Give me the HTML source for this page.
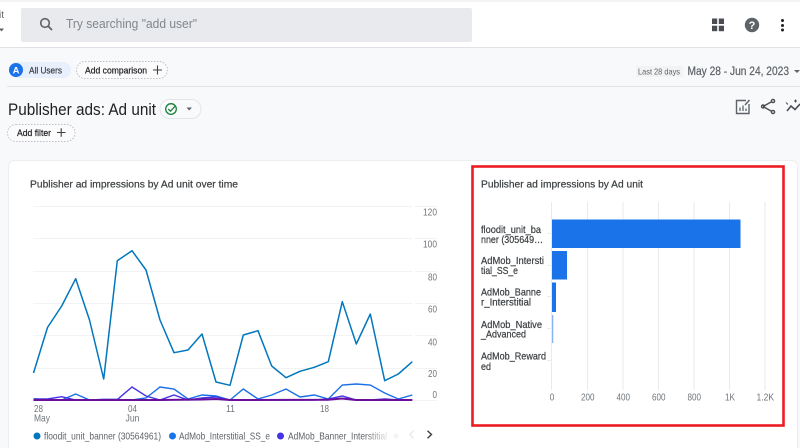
<!DOCTYPE html>
<html><head><meta charset="utf-8"><style>
html,body{margin:0;padding:0;width:800px;height:448px;overflow:hidden;background:#f8f9fa}
svg{display:block;font-family:"Liberation Sans",sans-serif;filter:blur(.3px)}
.m{stroke:currentColor;stroke-width:.22px}
</style></head><body>
<svg width="800" height="448" viewBox="0 0 800 448" xmlns="http://www.w3.org/2000/svg">
<defs><linearGradient id="fade" x1="0" x2="1" y1="0" y2="0"><stop offset="0" stop-color="#fff" stop-opacity="0"/><stop offset="1" stop-color="#fff" stop-opacity=".9"/></linearGradient></defs>
<rect width="800" height="448" fill="#f8f9fa"/>
<!-- header -->
<rect x="0" y="0" width="800" height="47" fill="#fff"/>
<rect x="0" y="0" width="800" height="2" fill="#f3f4f5"/>
<rect x="0" y="47" width="800" height="1" fill="#e0e2e5"/>
<text x="-1" y="18" font-size="10" fill="#5f6368">it</text>
<path d="M-1 28.500H4L1.500 31.500Z" fill="#5f6368"/>
<rect x="21" y="8" width="451" height="34" rx="2" fill="#e8eaed"/>
<circle cx="45" cy="23" r="4.300" fill="none" stroke="#5f6368" stroke-width="1.600"/>
<path d="M48 26L52 30" stroke="#5f6368" stroke-width="1.800"/>
<text x="66" y="28" font-size="13" fill="#80868b" textLength="131" lengthAdjust="spacingAndGlyphs">Try searching "add user"</text>
<!-- header right icons -->
<g fill="#4a4d52"><rect x="712" y="18.500" width="5.200" height="5.500"/><rect x="718.800" y="18.500" width="5.200" height="5.500"/><rect x="712" y="25.700" width="5.200" height="5.500"/><rect x="718.800" y="25.700" width="5.200" height="5.500"/></g>
<circle cx="752" cy="25" r="7.200" fill="#5f6368"/>
<text x="752" y="29" font-size="11" font-weight="bold" fill="#fff" text-anchor="middle">?</text>
<g fill="#202124"><circle cx="782.500" cy="20.500" r="1.500"/><circle cx="782.500" cy="25.500" r="1.500"/><circle cx="782.500" cy="30" r="1.500"/></g>
<!-- chips -->
<rect x="9" y="62" width="62" height="16" rx="8" fill="#e8f0fe"/>
<circle cx="16" cy="70" r="7" fill="#1a73e8"/>
<text x="16" y="73.500" font-size="9.500" font-weight="bold" fill="#fff" text-anchor="middle">A</text>
<text x="29" y="73.500" font-size="9.500" fill="#3c4043" color="#3c4043" class="m" textLength="33" lengthAdjust="spacingAndGlyphs">All Users</text>
<rect x="76.500" y="61.500" width="91" height="17" rx="8.500" fill="#fbfbfc" stroke="#bdc1c6" stroke-width="1" stroke-dasharray="1.500 1.500"/>
<text x="85" y="73.500" font-size="9.500" fill="#202124" color="#202124" class="m" textLength="62" lengthAdjust="spacingAndGlyphs">Add comparison</text>
<path d="M153 70H162M157.500 65.500V74.500" stroke="#3c4043" stroke-width="1.100"/>
<rect x="636" y="66" width="47" height="11" fill="#f1f3f4"/>
<text x="638" y="74.500" font-size="8.500" fill="#5f6368" textLength="42" lengthAdjust="spacingAndGlyphs">Last 28 days</text>
<text x="687.500" y="75" font-size="11.500" fill="#5f6368" color="#5f6368" class="m" textLength="101.500" lengthAdjust="spacingAndGlyphs">May 28 - Jun 24, 2023</text>
<path d="M794 70H800L797 73Z" fill="#5f6368"/>
<rect x="7" y="86" width="793" height="1" fill="#e3e5e8"/>
<!-- title -->
<text x="8" y="115" font-size="17" fill="#202124" textLength="148" lengthAdjust="spacingAndGlyphs">Publisher ads: Ad unit</text>
<rect x="160" y="99.500" width="41" height="19" rx="9.500" fill="#f9fafb" stroke="#e3e5e8"/>
<circle cx="171" cy="109" r="5.300" fill="none" stroke="#188038" stroke-width="1.300"/>
<path d="M168.300 109L170.500 111.200L175 106.300" fill="none" stroke="#188038" stroke-width="1.300"/>
<path d="M186.500 107.500H192L189.200 110.500Z" fill="#5f6368"/>
<rect x="7.500" y="124.500" width="67.500" height="17" rx="8.500" fill="#fbfbfc" stroke="#bdc1c6" stroke-dasharray="1.500 1.500"/>
<text x="17" y="136" font-size="9.500" fill="#202124" color="#202124" class="m" textLength="34" lengthAdjust="spacingAndGlyphs">Add filter</text>
<path d="M57 132.500H65.500M61.200 128.200V136.800" stroke="#3c4043" stroke-width="1.100"/>
<!-- action icons -->
<path d="M746 100.500H736.500V113.500H749V104" fill="none" stroke="#5f6368" stroke-width="1.400"/>
<path d="M740 111V107.500M743 111V105.500M746 111V108.500" stroke="#5f6368" stroke-width="1.300"/>
<path d="M745 105L749.500 100" stroke="#5f6368" stroke-width="1.500"/>
<g fill="none" stroke="#4a4d52" stroke-width="1.400"><path d="M763 106.500L772 101.500M763 106.500L772 111.500"/><circle cx="763" cy="106.500" r="1.500"/><circle cx="773" cy="101" r="1.600"/><circle cx="773" cy="112" r="1.600"/></g>
<path d="M787 111L791 106L795 109.500L800 104" fill="none" stroke="#4a4d52" stroke-width="1.600"/>
<path d="M786 102.500L788 104.500M794 101H797M795.500 99.500V102.500" stroke="#4a4d52" stroke-width="1"/>
<!-- card -->
<rect x="8.500" y="160.500" width="789" height="300" rx="6" fill="#fff" stroke="#eceef0"/>
<text x="30" y="187.500" font-size="10.500" fill="#3c4043" color="#3c4043" class="m" textLength="208" lengthAdjust="spacingAndGlyphs">Publisher ad impressions by Ad unit over time</text>
<!-- line chart grid -->
<g fill="#f1f3f4">
<rect x="33" y="206" width="379" height="1"/><rect x="33" y="238" width="379" height="1"/><rect x="33" y="271" width="379" height="1"/><rect x="33" y="303" width="379" height="1"/><rect x="33" y="335" width="379" height="1"/><rect x="33" y="368" width="379" height="1"/><rect x="33" y="400" width="379" height="1"/>
<rect x="415" y="206" width="22" height="1"/><rect x="415" y="238" width="22" height="1"/><rect x="415" y="271" width="22" height="1"/><rect x="415" y="303" width="22" height="1"/><rect x="415" y="335" width="22" height="1"/><rect x="415" y="368" width="22" height="1"/><rect x="415" y="400" width="22" height="1"/>
</g>
<g font-size="10.500" fill="#70757a">
<text x="423" y="215.500" textLength="14" lengthAdjust="spacingAndGlyphs">120</text><text x="423" y="247.500" textLength="14" lengthAdjust="spacingAndGlyphs">100</text><text x="428" y="280.500" textLength="9" lengthAdjust="spacingAndGlyphs">80</text><text x="428" y="312.500" textLength="9" lengthAdjust="spacingAndGlyphs">60</text><text x="428" y="345.500" textLength="9" lengthAdjust="spacingAndGlyphs">40</text><text x="428" y="377" textLength="9" lengthAdjust="spacingAndGlyphs">20</text><text x="432.500" y="398" textLength="4.500" lengthAdjust="spacingAndGlyphs">0</text>
</g>
<!-- lines -->
<polyline fill="none" stroke="#0277bd" stroke-width="1.500" stroke-linejoin="round" points="33.500,373 47.500,327.500 61.700,306 75.700,278.700 89.500,320 103.700,379 117.300,260.700 132,250.700 146,270 160,320 174,352.700 188,350 202,334 216,382 230,385.300 243.300,335 258,330.700 271.700,366 286,377.700 300,371.300 314.300,367.300 328.300,361.700 342.300,301.700 356.300,344 370.300,314 384.700,380.700 398.300,374 412.300,361.700"/>
<polyline fill="none" stroke="#1a6fe8" stroke-width="1.400" points="33.500,399 47.500,399.500 61.700,400 75.700,394 89.500,400 103.700,399.500 117.300,399.500 132,400 146,398 160,387 174,389 188,399 202,395 216,396 230,400 243.300,389 258,399 271.700,395 286,389 300,397 314.300,395 328.300,399 342.300,385 356.300,384 370.300,385 384.700,393 398.300,399 412.300,395"/>
<polyline fill="none" stroke="#4433e6" stroke-width="1.400" points="33.500,399 47.500,399 61.700,396.700 75.700,400 89.500,400 103.700,399.500 117.300,399.500 132,387 146,396 160,400 174,395 188,400 202,398 216,397 230,400 243.300,400 258,400 271.700,400 286,400 300,400 314.300,400 328.300,399 342.300,396 356.300,400 370.300,400 384.700,399 398.300,400 412.300,400"/>
<polyline fill="none" stroke="#6a0f9c" stroke-width="2" points="33.500,400 146,400 160,400 202,399.500 216,399 230,400 328,399.800 342,398.500 356,400 412.300,400"/>
<!-- x labels -->
<g font-size="10.300" fill="#70757a">
<text x="34" y="412" textLength="9" lengthAdjust="spacingAndGlyphs">28</text><text x="34" y="421.500" textLength="16" lengthAdjust="spacingAndGlyphs">May</text>
<text x="128" y="412" textLength="9" lengthAdjust="spacingAndGlyphs">04</text><text x="125.500" y="421.500" textLength="14" lengthAdjust="spacingAndGlyphs">Jun</text>
<text x="226" y="412" textLength="9" lengthAdjust="spacingAndGlyphs">11</text><text x="320" y="412" textLength="9" lengthAdjust="spacingAndGlyphs">18</text>
</g>
<!-- legend -->
<circle cx="37" cy="436" r="3.500" fill="#0277bd"/>
<text x="44" y="439.500" font-size="10.500" fill="#5f6368" textLength="117" lengthAdjust="spacingAndGlyphs">floodit_unit_banner (30564961)</text>
<circle cx="172.500" cy="436" r="3.500" fill="#1a73e8"/>
<text x="179" y="439.500" font-size="10.500" fill="#5f6368" textLength="91" lengthAdjust="spacingAndGlyphs">AdMob_Interstitial_SS_e</text>
<circle cx="280.500" cy="436" r="3.500" fill="#4433e6"/>
<text x="288" y="439.500" font-size="10.500" fill="#5f6368" textLength="99" lengthAdjust="spacingAndGlyphs">AdMob_Banner_Interstitial</text>
<rect x="365" y="429" width="24" height="14" fill="url(#fade)"/>
<circle cx="396" cy="436" r="2.500" fill="#f1f3f4"/>
<path d="M413.500 430.700L409.800 434.500L413.500 438.300" fill="none" stroke="#e8eaed" stroke-width="1.400"/>
<path d="M427.500 430.700L431.500 434.500L427.500 438.300" fill="none" stroke="#3c4043" stroke-width="1.400"/>
<!-- bar chart -->
<text x="481" y="187.500" font-size="10.500" fill="#3c4043" color="#3c4043" class="m" textLength="162" lengthAdjust="spacingAndGlyphs">Publisher ad impressions by Ad unit</text>
<g fill="#e8eaed">
<rect x="551" y="202" width="1" height="188"/><rect x="587" y="202" width="1" height="188"/><rect x="622.500" y="202" width="1" height="188"/><rect x="658" y="202" width="1" height="188"/><rect x="693.500" y="202" width="1" height="188"/><rect x="729" y="202" width="1" height="188"/><rect x="764.500" y="202" width="1" height="188"/>
<rect x="547" y="233" width="4" height="1"/><rect x="547" y="265" width="4" height="1"/><rect x="547" y="296" width="4" height="1"/><rect x="547" y="328" width="4" height="1"/><rect x="547" y="360" width="4" height="1"/>
</g>
<g fill="#1a73e8">
<rect x="552" y="219.500" width="188.500" height="28.500"/>
<rect x="552" y="251" width="15" height="28.500"/>
<rect x="552" y="282.500" width="4" height="29.500"/>
<rect x="552" y="315" width="1.300" height="28" fill="#8ab4f8"/>
</g>
<g font-size="10.300" fill="#3c4043" color="#3c4043" class="m">
<text x="481" y="232.800" textLength="60" lengthAdjust="spacingAndGlyphs">floodit_unit_ba</text>
<text x="481" y="242.800" textLength="62" lengthAdjust="spacingAndGlyphs">nner (305649…</text>
<text x="481" y="263.800" textLength="63" lengthAdjust="spacingAndGlyphs">AdMob_Intersti</text>
<text x="481" y="273.800" textLength="37" lengthAdjust="spacingAndGlyphs">tial_SS_e</text>
<text x="481" y="295.500" textLength="60" lengthAdjust="spacingAndGlyphs">AdMob_Banne</text>
<text x="481" y="305.500" textLength="50" lengthAdjust="spacingAndGlyphs">r_Interstitial</text>
<text x="481" y="327.800" textLength="61" lengthAdjust="spacingAndGlyphs">AdMob_Native</text>
<text x="481" y="337.300" textLength="45" lengthAdjust="spacingAndGlyphs">_Advanced</text>
<text x="481" y="359.300" textLength="65" lengthAdjust="spacingAndGlyphs">AdMob_Reward</text>
<text x="481" y="369.800" textLength="10" lengthAdjust="spacingAndGlyphs">ed</text>
</g>
<g font-size="10.500" fill="#70757a">
<text x="549.800" y="400.500" textLength="4.500" lengthAdjust="spacingAndGlyphs">0</text><text x="581" y="400.500" textLength="13.500" lengthAdjust="spacingAndGlyphs">200</text><text x="616.500" y="400.500" textLength="13.500" lengthAdjust="spacingAndGlyphs">400</text><text x="652" y="400.500" textLength="13.500" lengthAdjust="spacingAndGlyphs">600</text><text x="687.500" y="400.500" textLength="13.500" lengthAdjust="spacingAndGlyphs">800</text><text x="725" y="400.500" textLength="10" lengthAdjust="spacingAndGlyphs">1K</text><text x="756.500" y="400.500" textLength="17.500" lengthAdjust="spacingAndGlyphs">1.2K</text>
</g>
<!-- red highlight -->
<rect x="472.500" y="166.500" width="311" height="259" fill="none" stroke="#ed1c24" stroke-width="2.600"/>
</svg>
</body></html>
